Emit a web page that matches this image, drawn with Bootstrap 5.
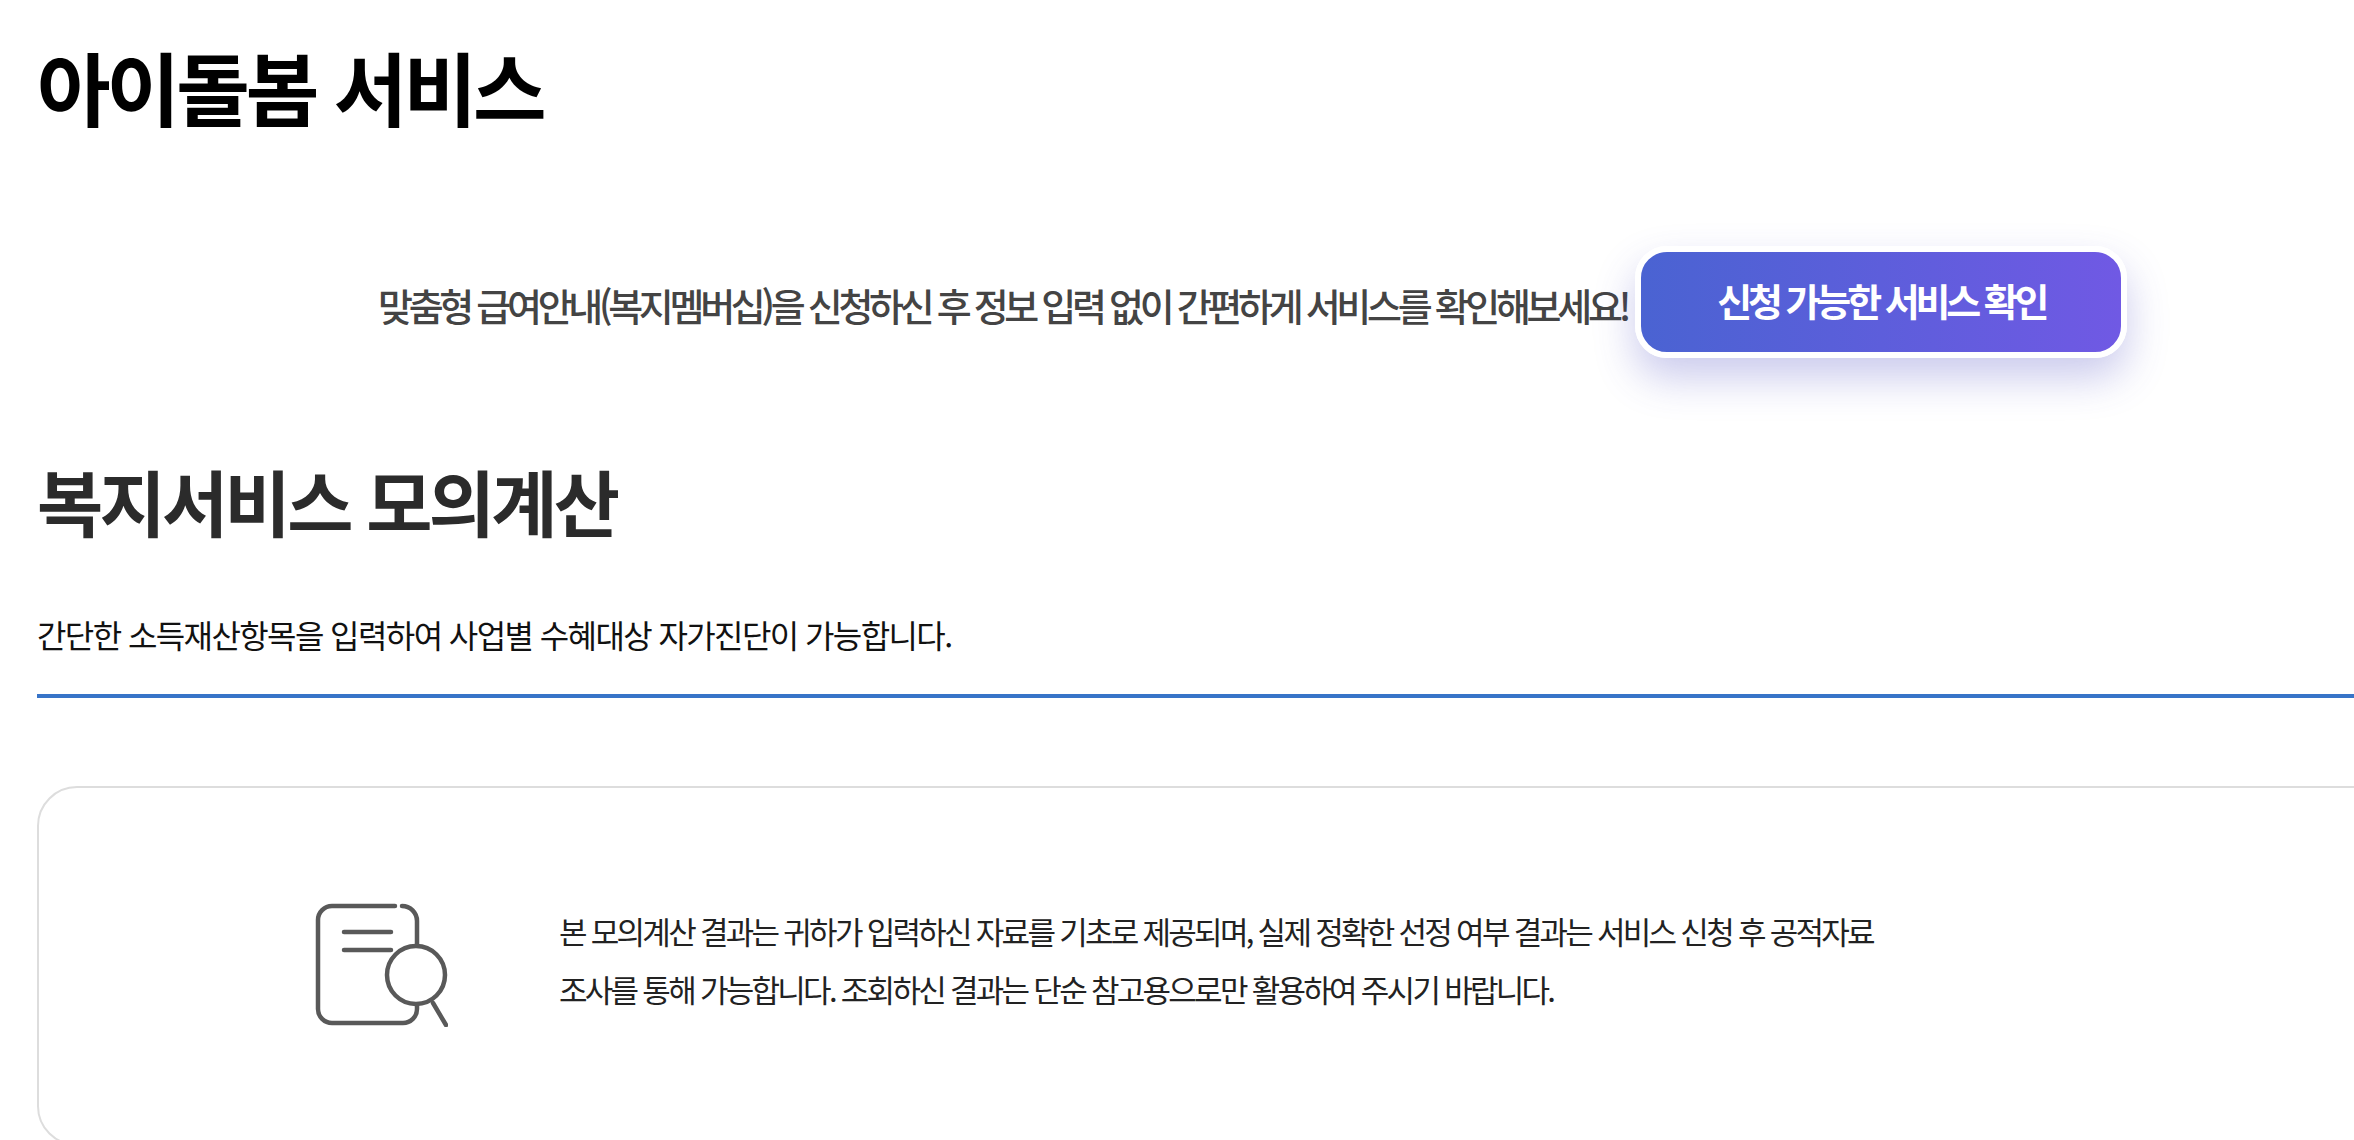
<!DOCTYPE html>
<html lang="ko">
<head>
  <meta charset="UTF-8"/>
  <title>아이돌봄 서비스</title>
  <link href="https://cdn.jsdelivr.net/npm/bootstrap@5.3.0/dist/css/bootstrap.min.css" rel="stylesheet"/>
  <style>
    html, body { overflow: hidden; }
    body { font-family: "Noto Sans CJK KR", "Liberation Sans", sans-serif; color: #111; background: #fff; }
    .page-wrap { padding: 0 0 0 37px; width: 2400px; }
    .page-title { font-size: 80px; font-weight: 700; letter-spacing: -4px; line-height: 90px; margin: 40px 0 0; color: #000; }
    .apply-row { margin-top: 116px; height: 112px; padding-left: 341px; }
    .apply-text { font-size: 38px; font-weight: 500; letter-spacing: -4.3px; color: #444; margin-top: 4px; white-space: nowrap; }
    .apply-btn { width: 492px; height: 112px; flex: none; padding-bottom: 12px; border: 6px solid #fff; border-radius: 32px; background: linear-gradient(90deg, #4a63d2, #7059e4); color: #fff; font-size: 38px; font-weight: 700; letter-spacing: -4.1px; box-shadow: 0 20px 40px rgba(70, 70, 190, .28); }
    .sub-title { font-size: 72px; font-weight: 700; letter-spacing: -3.7px; color: #2b2b2b; line-height: 80px; margin: 102px 0 0; }
    .sub-desc { font-size: 32px; letter-spacing: -1.6px; margin: 72px 0 0; line-height: 44px; color: #111; }
    .sub-line { height: 4px; background: #3774c8; margin-top: 38px; }
    .notice-box { margin-top: 88px; height: 360px; border: 2px solid #ddd; border-radius: 40px; padding: 114px 0 0 275px; }
    .notice-text { font-size: 31px; letter-spacing: -2.72px; line-height: 58px; margin: 0 0 0 111px; color: #222; width: 1400px; }
  </style>
</head>
<body>
  <div class="page-wrap">
    <h1 class="page-title">아이돌봄 서비스</h1>
    <div class="apply-row d-flex align-items-center gap-2">
      <span class="apply-text">맞춤형 급여안내(복지멤버십)을 신청하신 후 정보 입력 없이 간편하게 서비스를 확인해보세요!</span>
      <button type="button" class="btn apply-btn">신청 가능한 서비스 확인</button>
    </div>
    <h2 class="sub-title">복지서비스 모의계산</h2>
    <p class="sub-desc">간단한 소득재산항목을 입력하여 사업별 수혜대상 자가진단이 가능합니다.</p>
    <div class="sub-line"></div>
    <div class="notice-box d-flex align-items-start">
      <svg width="134" height="125" viewBox="0 0 134 125" fill="none" stroke="#595959" stroke-width="4.5" stroke-linecap="round" class="flex-shrink-0">
        <path d="M81 4H18A14 14 0 0 0 4 18V107a14 14 0 0 0 14 14H89a14 14 0 0 0 14-14V103"/>
        <path d="M88 4a15 15 0 0 1 15 15V43"/>
        <path d="M30 30H77M30 48H77"/>
        <circle cx="102" cy="73" r="29"/>
        <path d="M119 101L132 123"/>
      </svg>
      <p class="notice-text">본 모의계산 결과는 귀하가 입력하신 자료를 기초로 제공되며, 실제 정확한 선정 여부 결과는 서비스 신청 후 공적자료<br/>조사를 통해 가능합니다. 조회하신 결과는 단순 참고용으로만 활용하여 주시기 바랍니다.</p>
    </div>
  </div>
  <script src="https://cdn.jsdelivr.net/npm/bootstrap@5.3.0/dist/js/bootstrap.bundle.min.js"></script>
</body>
</html>
